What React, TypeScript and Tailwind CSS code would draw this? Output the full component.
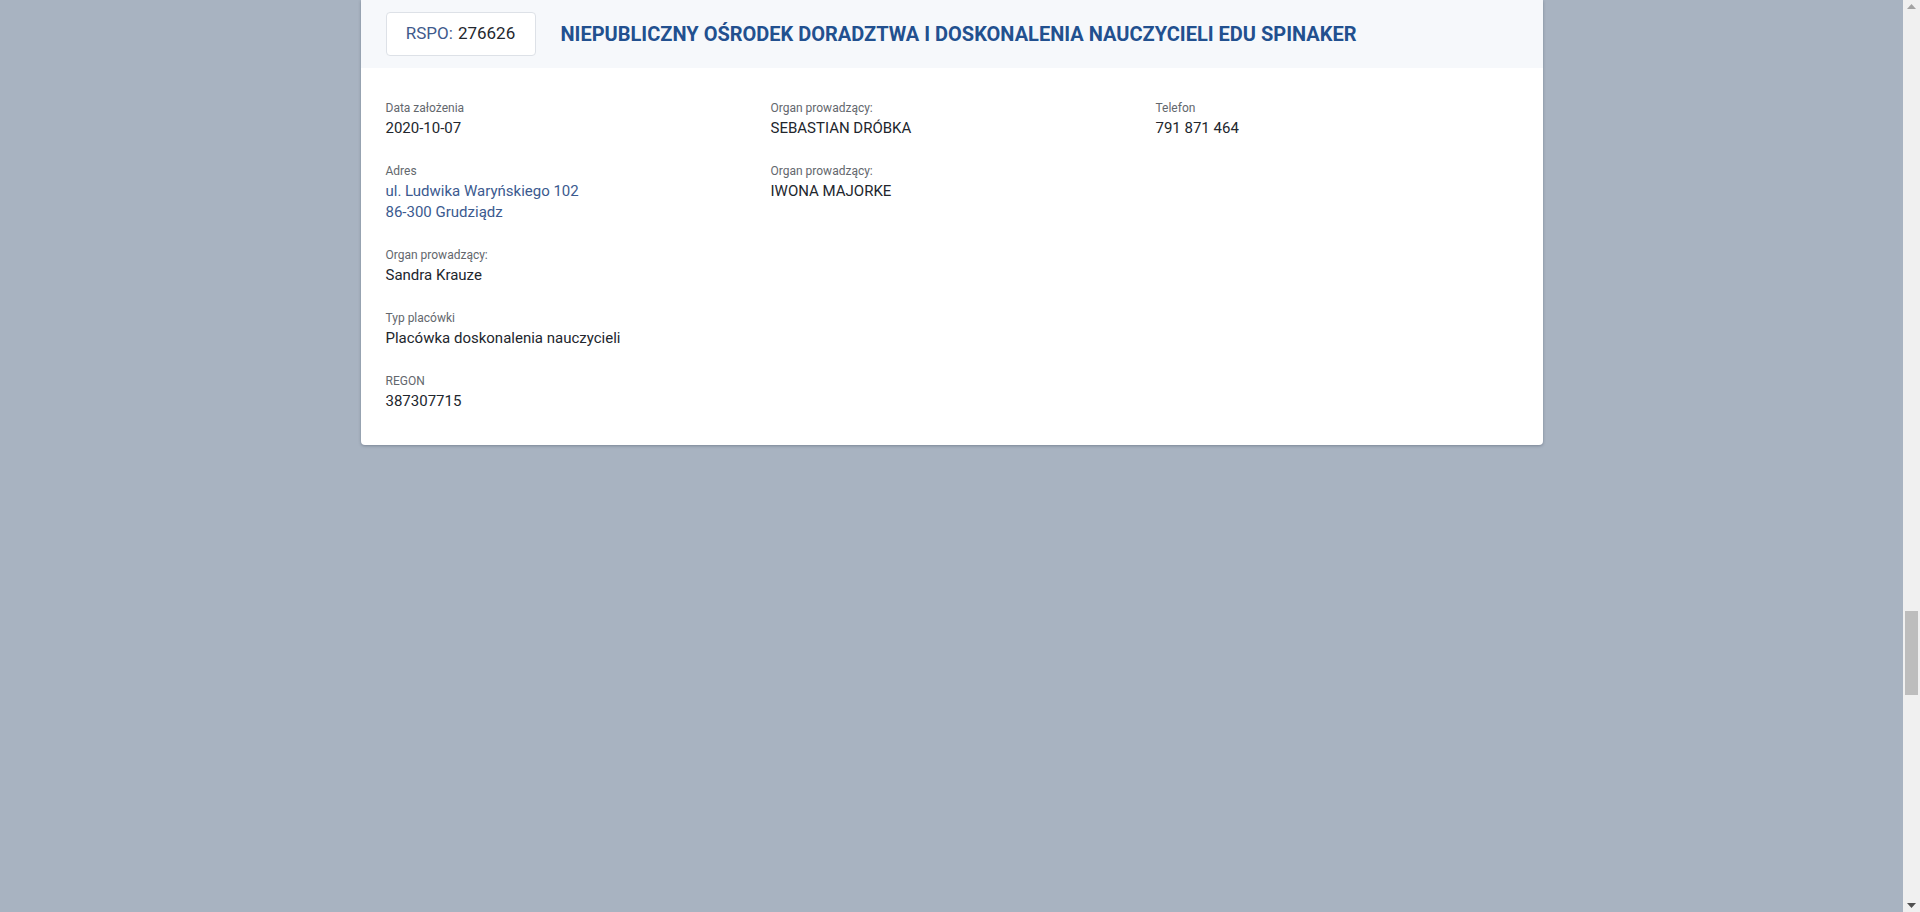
const Field = ({ label, children, blue = false }: { label: string; children: React.ReactNode; blue?: boolean }) => (
  <div className="mb-[23px]">
    <div className="text-[12px] leading-[18px] text-[#63676d]">{label}</div>
    <div className={`mt-[1px] text-[15px] leading-[21px] ${blue ? "text-[#3b5a8f]" : "text-[#22262d]"}`}>{children}</div>
  </div>
)

export default function App() {
  return (
    <div className="flex h-[912px] w-full overflow-hidden bg-[#a8b3c1] font-['Roboto',sans-serif]">
      <div className="flex flex-1 justify-center">
        <div className="h-[445px] w-[1182px] overflow-hidden rounded-b-[4px] bg-white shadow-[0_1px_3px_rgba(40,50,70,0.35)]">
          <div className="flex h-[68px] items-center gap-[25px] bg-[#f6f8fb] px-[25px]">
            <div className="flex h-[44px] w-[150px] items-center justify-center rounded-[4px] border border-[#dde1e7] bg-white text-[17px]">
              <span className="text-[#3f5a8c]">RSPO:</span>
              <span className="ml-[5px] text-[#23272e]">276626</span>
            </div>
            <h1 className="text-[20px] font-bold text-[#22508f]">
              NIEPUBLICZNY OŚRODEK DORADZTWA I DOSKONALENIA NAUCZYCIELI EDU SPINAKER
            </h1>
          </div>
          <div className="grid grid-cols-[385px_385px_1fr] pl-[25px] pt-[31px]">
            <div>
              <Field label="Data założenia">2020-10-07</Field>
              <Field label="Adres" blue>
                ul. Ludwika Waryńskiego 102
                <br />
                86-300 Grudziądz
              </Field>
              <Field label="Organ prowadzący:">Sandra Krauze</Field>
              <Field label="Typ placówki">Placówka doskonalenia nauczycieli</Field>
              <Field label="REGON">387307715</Field>
            </div>
            <div>
              <Field label="Organ prowadzący:">SEBASTIAN DRÓBKA</Field>
              <Field label="Organ prowadzący:">IWONA MAJORKE</Field>
            </div>
            <div>
              <Field label="Telefon">791 871 464</Field>
            </div>
          </div>
        </div>
      </div>
      <div className="flex w-[17px] flex-col items-center bg-[#f0f0f0]">
        <svg className="mt-[4px]" width="9" height="5" viewBox="0 0 9 5">
          <path d="M0 5 L4.5 0 L9 5 Z" fill="#a3a3a3" />
        </svg>
        <div className="mt-[602px] h-[84px] w-[13px] bg-[#bdbdbd]" />
        <div className="flex-1" />
        <svg className="mb-[4px]" width="9" height="5" viewBox="0 0 9 5">
          <path d="M0 0 L9 0 L4.5 5 Z" fill="#505050" />
        </svg>
      </div>
    </div>
  )
}
